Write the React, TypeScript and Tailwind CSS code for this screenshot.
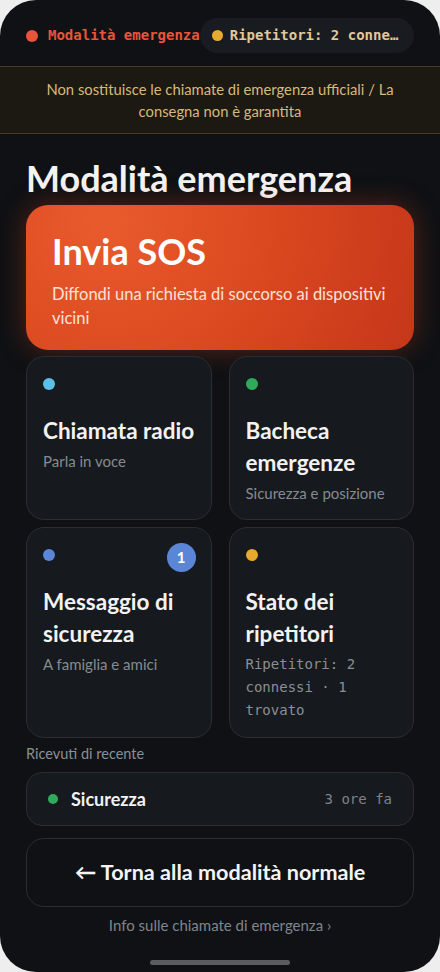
import { ReactNode } from 'react';

const sans = { fontFamily: 'Lato, "Noto Sans", sans-serif' };
const mono = { fontFamily: '"DejaVu Sans Mono", "Liberation Mono", monospace' };

function Tile({
  dot,
  title,
  children,
  badge,
}: {
  dot: string;
  title: ReactNode;
  children: ReactNode;
  badge?: string;
}) {
  return (
    <div className="relative rounded-[18px] border border-[#2a2e34] bg-[#16191d] px-[16px] pt-[21px] pb-[15px]">
      <div className={`h-[12px] w-[12px] rounded-full ${dot}`} />
      {badge && (
        <div className="absolute right-[15px] top-[15px] flex h-[29px] w-[29px] items-center justify-center rounded-full bg-[#5b86d8] text-[15px] font-bold text-white">
          {badge}
        </div>
      )}
      <div className="mt-[25px] text-[22.5px] font-bold leading-[32px] text-[#f2f2f2]">{title}</div>
      <div className="mt-[3px] text-[15px] leading-[22px] text-[#868b92]">{children}</div>
    </div>
  );
}

export default function App() {
  return (
    <div className="min-h-[972px] bg-[#eeeeee]" style={sans}>
      <div className="relative flex h-[972px] flex-col overflow-hidden rounded-[36px] bg-[#0f1114]">
        {/* status */}
        <div className="flex items-center px-[26px] pt-[18px] text-[14px] font-bold" style={mono}>
          <span className="h-[12px] w-[12px] shrink-0 rounded-full bg-[#e8553a]" />
          <span className="ml-[10px] whitespace-nowrap text-[#e8553a]">Modalità emergenza</span>
          <div className="flex h-[35px] min-w-0 flex-1 items-center rounded-full bg-[#181b20] pl-[12px] pr-[12px]">
            <span className="h-[11px] w-[11px] shrink-0 rounded-full bg-[#e8aa2e]" />
            <span className="ml-[7px] truncate text-[#e2c79a]">Ripetitori: 2 connessi · 1 trovato</span>
          </div>
        </div>

        {/* warning */}
        <div className="mt-[13px] border-y border-[#4a3825] bg-[#1c1913] px-[28px] py-[11px] text-center text-[14.8px] leading-[22px] text-[#d8b87c]">
          Non sostituisce le chiamate di emergenza ufficiali / La consegna non è garantita
        </div>

        <div className="flex flex-1 flex-col px-[26px]">
          <h1 className="mt-[22px] text-[36px] font-bold leading-[44px] text-[#f4f4f4]">Modalità emergenza</h1>

          {/* SOS */}
          <div className="mt-[5px] rounded-[22px] bg-[radial-gradient(circle_at_20%_10%,#e95b2d_0%,#da481f_50%,#c6361a_100%)] pl-[26px] pr-[16px] pt-[25px] pb-[20px] shadow-[0_0_28px_rgba(220,70,30,0.35)]">
            <div className="text-[36px] font-bold leading-[42px] text-white">Invia SOS</div>
            <div className="mt-[10px] text-[16.5px] leading-[24px] text-[#fbe2d8]">
              Diffondi una richiesta di soccorso ai dispositivi vicini
            </div>
          </div>

          {/* grid */}
          <div className="mt-[6px] grid grid-cols-2 gap-x-[17px] gap-y-[7px]">
            <Tile dot="bg-[#5bbfe8]" title="Chiamata radio">
              Parla in voce
            </Tile>
            <Tile dot="bg-[#2fa95a]" title="Bacheca emergenze">
              Sicurezza e posizione
            </Tile>
            <Tile dot="bg-[#5b86d8]" title="Messaggio di sicurezza" badge="1">
              A famiglia e amici
            </Tile>
            <Tile dot="bg-[#e8aa2e]" title="Stato dei ripetitori">
              <div className="mt-[2px] text-[14px] leading-[23px] text-[#8a8f96]" style={mono}>
                Ripetitori: 2 connessi · 1 trovato
              </div>
            </Tile>
          </div>

          <div className="mt-[6px] text-[14.5px] leading-[20px] text-[#8a8f96]">Ricevuti di recente</div>

          <div className="mt-[8px] flex h-[54px] items-center rounded-[16px] border border-[#2a2e34] bg-[#16191d] pl-[21px] pr-[21px]">
            <span className="h-[10px] w-[10px] rounded-full bg-[#2fa95a]" />
            <span className="ml-[13px] text-[18px] font-bold text-[#f2f2f2]">Sicurezza</span>
            <span className="ml-auto text-[14px] text-[#7e838a]" style={mono}>
              3 ore fa
            </span>
          </div>

          <button className="mt-[12px] flex h-[69px] items-center justify-center rounded-[18px] border border-[#2a2e34] text-[21.6px] font-bold text-[#f4f4f4]">
            ← Torna alla modalità normale
          </button>

          <div className="mt-[8px] text-center text-[15px] leading-[20px] text-[#80858c]">
            Info sulle chiamate di emergenza ›
          </div>
        </div>

        <div className="absolute bottom-[7px] left-1/2 h-[5px] w-[140px] -translate-x-1/2 rounded-full bg-[#5a5c60]" />
      </div>
    </div>
  );
}
